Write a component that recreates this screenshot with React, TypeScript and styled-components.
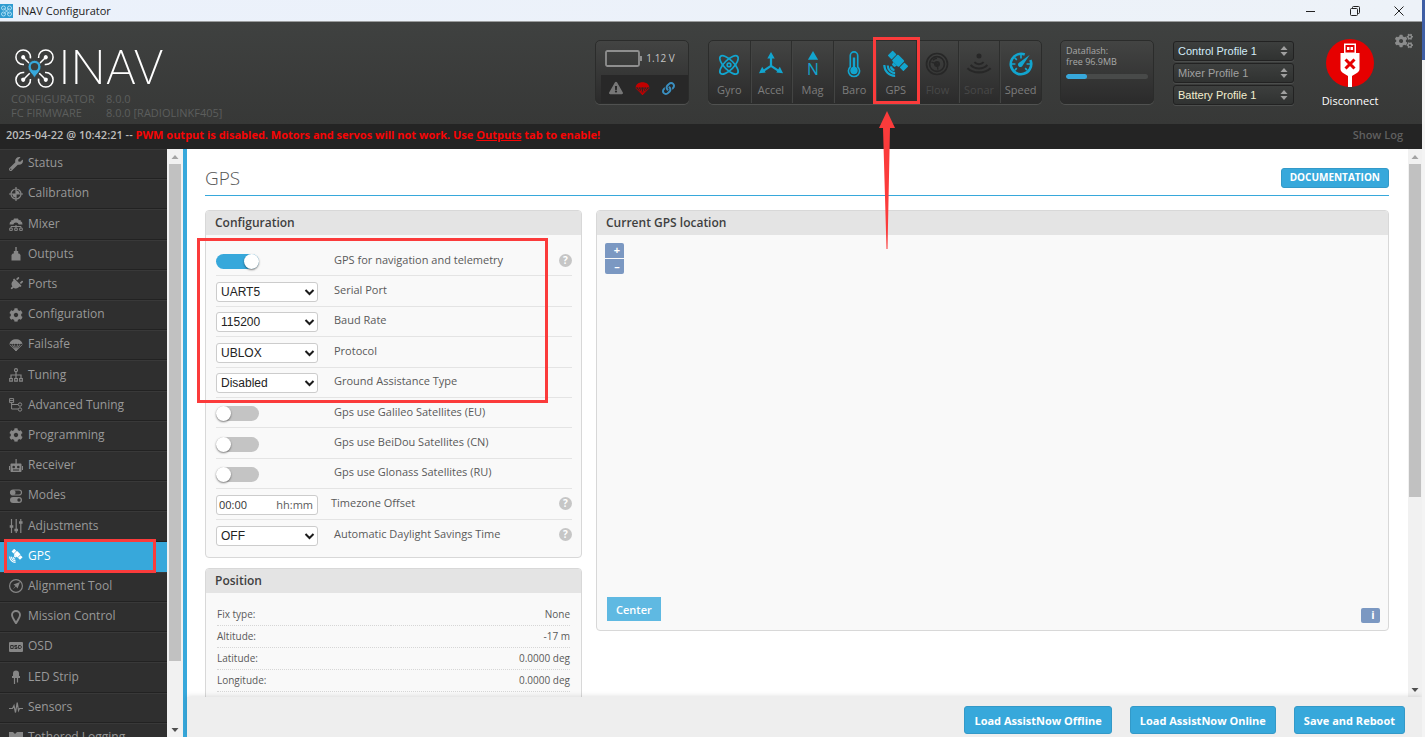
import React, { useId } from "react";
import styled, { createGlobalStyle, css } from "styled-components";
import { FaWrench, FaPlug, FaCog, FaCogs, FaLink, FaExclamationTriangle } from "react-icons/fa";

const GlobalStyle = createGlobalStyle`
  *, *::before, *::after { box-sizing: border-box; }
  html, body, #root { height: 100%; }
  body {
    margin: 0;
    overflow: hidden;
    font-family: "Open Sans", "Noto Sans", sans-serif;
    font-size: 11px;
    color: #5a5a5a;
    background: linear-gradient(#3f5fa5 60px, #f4f4f4 60px);
  }
  button, select, input { font-family: inherit; }
`;

const accent = "#37a8db";
const sensorBlue = "#12a5cf";
const markRed = "#fb3b3b";

/* ---------- window frame ---------- */

const Window = styled.div`
  display: flex;
  flex-direction: column;
  height: 100vh;
  margin-right: 3px;
  overflow: hidden;
  background: #fff;
`;

const TitleBar = styled.div`
  display: flex;
  align-items: center;
  flex: none;
  height: 22px;
  padding-right: 16px;
  gap: 5px;
  background: linear-gradient(90deg, #ebf1fb, #edf2f8);
  border-bottom: 1px solid #9a9c9d;
  color: #1c1c1c;
  font-size: 11px;
`;

const WindowTitle = styled.span`
  flex: 1;
`;

const WindowButton = styled.button`
  display: flex;
  align-items: center;
  justify-content: center;
  width: 14px;
  height: 14px;
  margin-left: 25px;
  padding: 0;
  border: 0;
  background: none;
  color: #222;
`;

/* ---------- header ---------- */

const Header = styled.header`
  display: flex;
  flex: none;
  height: 102px;
  padding: 18px 8px 0 11px;
  background: linear-gradient(#3f4140, #373837);
`;

const Brand = styled.div`
  flex: 1;
  padding-top: 4px;
`;

const LogoRow = styled.div`
  display: flex;
  align-items: center;
  gap: 4px;
  height: 48px;
  padding-left: 4px;
`;

const LogoText = styled.span`
  color: #fff;
  font-family: Roboto, "Open Sans", sans-serif;
  font-size: 49px;
  font-weight: 200;
  line-height: 48px;
`;

const Versions = styled.dl`
  display: grid;
  grid-template-columns: 95px auto;
  margin: 0;
  line-height: 14px;
  color: #5c5e5d;
  dd { margin: 0; }
`;

const panelFace = css`
  border: 1px solid #2b2c2b;
  border-radius: 5px;
  background: linear-gradient(#434443, #2b2b2b);
  box-shadow: 0 1px 0 #505150;
`;

const BatteryBox = styled.div`
  ${panelFace}
  width: 94px;
  height: 64px;
  margin-right: 19px;
  overflow: hidden;
`;

const BatteryTop = styled.div`
  display: flex;
  align-items: center;
  justify-content: center;
  gap: 4px;
  height: 34px;
  padding-right: 4px;
  color: #c4c4c4;
  font-size: 10px;
`;

const BatteryFlags = styled.div`
  display: flex;
  align-items: center;
  justify-content: space-around;
  height: 28px;
  margin-left: 5px;
  padding: 0 7px 2px 2px;
  background: #282828;
`;

const Sensors = styled.ul`
  ${panelFace}
  display: flex;
  width: 334px;
  height: 64px;
  margin: 0 18px 0 0;
  padding: 0;
  list-style: none;
`;

const SensorCell = styled.li<{ $off?: boolean }>`
  position: relative;
  display: flex;
  flex: 1 1 0;
  flex-direction: column;
  align-items: center;
  padding-top: 10px;
  gap: 3px;
  line-height: 20px;
  color: ${(p) => (p.$off ? "#484848" : "#7d7d7d")};
  svg { color: ${(p) => (p.$off ? "#272727" : sensorBlue)}; overflow: visible; }
  & + & { border-left: 1px solid #2d2e2d; box-shadow: inset 1px 0 0 #434443; }
`;

const Dataflash = styled.div`
  ${panelFace}
  width: 94px;
  height: 64px;
  margin-right: 19px;
  padding: 4px 5px;
  color: #a8a8a8;
  font-size: 9px;
  line-height: 11px;
`;

const Meter = styled.div`
  height: 5px;
  margin-top: 7px;
  overflow: hidden;
  border-radius: 3px;
  background: #484a49;
`;

const MeterFill = styled.div`
  height: 100%;
  border-radius: 3px;
  background: ${accent};
`;

const Profiles = styled.div`
  display: flex;
  flex-direction: column;
  gap: 2px;
  width: 121px;
  margin-right: 26px;
  padding-top: 1px;
`;

const SelectShell = styled.div`
  display: grid;
  align-items: center;
  > * { grid-area: 1 / 1; }
  > svg { justify-self: end; pointer-events: none; }
`;

const ProfileSelect = styled.select<{ $tone: string }>`
  width: 100%;
  height: 20px;
  padding: 0 4px;
  appearance: none;
  border: 1px solid #222;
  border-radius: 3px;
  background: linear-gradient(#3d3f3e, #303231);
  box-shadow: 0 1px 0 #4c4e4d;
  color: ${(p) => p.$tone};
  font-family: "Liberation Sans", Arial, sans-serif;
  font-size: 11px;
`;

const ConnectButton = styled.button`
  display: flex;
  flex-direction: column;
  align-items: center;
  width: 60px;
  height: 72px;
  margin-top: -1px;
  padding: 0;
  gap: 5px;
  border: 0;
  background: none;
  color: #fff;
  font-size: 11px;
  line-height: 17px;
  svg { flex: none; }
`;

const SettingsButton = styled.button`
  width: 20px;
  height: 20px;
  margin: -8px 0 0 14px;
  padding: 0;
  border: 0;
  background: none;
  color: #8b8c8c;
`;

/* ---------- log bar ---------- */

const LogBar = styled.div`
  display: flex;
  align-items: center;
  flex: none;
  height: 25px;
  padding: 0 19px 5px 6px;
  background: #242424;
  color: #bdbdbd;
  font-weight: 600;
  white-space: pre;
`;

const LogText = styled.p`
  flex: 1;
  margin: 0;
`;

const LogWarning = styled.strong`
  color: #f60505;
  font-weight: 700;
  a { color: inherit; }
`;

const ShowLog = styled.button`
  padding: 0;
  border: 0;
  background: none;
  color: #606060;
  font-size: 11px;
  font-weight: 600;
`;

/* ---------- body ---------- */

const Body = styled.div`
  display: flex;
  flex: 1;
  min-height: 0;
`;

const Sidebar = styled.div`
  display: flex;
  flex: none;
  border-right: 4px solid ${accent};
  background: #2f2f2f;
`;

const Nav = styled.nav`
  width: 167px;
  overflow: hidden;
`;

const NavList = styled.ul`
  display: flex;
  flex-direction: column;
  height: calc(100% + 16px);
  margin: 0;
  padding: 0;
  list-style: none;
`;

const NavItem = styled.li`
  position: relative;
  flex: 1 0 30px;
`;

const NavLink = styled.a<{ $active?: boolean }>`
  display: flex;
  align-items: center;
  height: 100%;
  padding: 0 0 3px 9px;
  gap: 5px;
  border-top: 1px solid ${(p) => (p.$active ? accent : "#393939")};
  border-bottom: 1px solid ${(p) => (p.$active ? accent : "#222")};
  background: ${(p) => (p.$active ? accent : "transparent")};
  color: ${(p) => (p.$active ? "#fff" : "#999")};
  font-size: 12px;
  text-decoration: none;
  white-space: nowrap;
  svg { flex: none; color: ${(p) => (p.$active ? "#fff" : "#868686")}; margin-top: 2px; }
`;

const Track = styled.div<{ $wide?: boolean }>`
  display: flex;
  flex: none;
  flex-direction: column;
  align-items: center;
  width: ${(p) => (p.$wide ? 16 : 14)}px;
  background: #f1f1f1;
  svg { flex: none; }
`;

const Thumb = styled.div<{ $share: number }>`
  flex: ${(p) => p.$share} 0 0;
  width: 12px;
  background: #c1c1c1;
`;

const TrackRest = styled.div<{ $share: number }>`
  flex: ${(p) => p.$share} 0 0;
`;

const Main = styled.main`
  display: flex;
  flex: 1;
  flex-direction: column;
  min-width: 0;
`;

const ScrollArea = styled.div`
  display: flex;
  flex: 1;
  min-height: 0;
`;

const Content = styled.div`
  flex: 1;
  min-width: 0;
  padding: 14px 19px 0 18px;
  overflow: hidden;
`;

const PageHead = styled.div`
  display: flex;
  align-items: center;
  justify-content: space-between;
  height: 33px;
  margin-bottom: 14px;
  padding-bottom: 3px;
  border-bottom: 1px solid ${accent};
`;

const PageTitle = styled.h1`
  margin: 0;
  color: #555;
  font-size: 19px;
  font-weight: 300;
`;

const DocLink = styled.a`
  padding: 0 8px 1px;
  border: 1px solid #3399c8;
  border-radius: 3px;
  background: ${accent};
  color: #fff;
  font-size: 10px;
  font-weight: 700;
  line-height: 17px;
  text-decoration: none;
`;

const Columns = styled.div`
  display: grid;
  grid-template-columns: 377fr 793fr;
  align-items: start;
  gap: 14px;
`;

const LeftColumn = styled.div`
  display: grid;
  gap: 10px;
`;

const Panel = styled.section`
  position: relative;
  border: 1px solid #d8d8d8;
  border-radius: 4px;
  background: #f9f9f9;
`;

const PanelTitle = styled.h2`
  margin: 0;
  padding: 0 9px;
  border-radius: 3px 3px 0 0;
  background: #e4e4e4;
  color: #3f3f3f;
  font-size: 12px;
  font-weight: 600;
  line-height: 24px;
`;

const Settings = styled.div`
  display: grid;
  grid-auto-rows: 1fr;
  min-height: 304px;
  margin: 11px 9px 7px 10px;
`;

const SettingRow = styled.div`
  display: flex;
  align-items: center;
  border-bottom: 1px solid #e4e4e4;
  &:last-child { border-bottom: 0; }
`;

const ControlCell = styled.div<{ $tight?: boolean }>`
  width: ${(p) => (p.$tight ? 115 : 118)}px;
  padding-top: 2px;
`;

const SettingLabel = styled.label`
  flex: 1;
  padding-bottom: 3px;
`;

const SettingSelect = styled.select`
  width: 102px;
  height: 20px;
  padding: 0 4px;
  appearance: none;
  border: 1px solid #ccc;
  border-radius: 3px;
  background: #fff;
  color: #222;
  font-family: "Liberation Sans", Arial, sans-serif;
  font-size: 12px;
`;

const SettingShell = styled(SelectShell)`
  width: 102px;
`;

const TimeBox = styled.div`
  display: flex;
  align-items: center;
  width: 102px;
  height: 20px;
  padding: 0 4px 0 2px;
  border: 1px solid #ccc;
  border-radius: 3px;
  background: #fff;
`;

const TimeInput = styled.input`
  flex: 1;
  min-width: 0;
  padding: 0;
  border: 0;
  background: none;
  color: #333;
  font-size: 11px;
`;

const Switch = styled.input`
  display: block;
  width: 43px;
  height: 15px;
  margin: 0;
  appearance: none;
  border-radius: 8px;
  background: #c4c4c4;
  &::before {
    content: "";
    display: block;
    width: 15px;
    height: 15px;
    border-radius: 50%;
    background: #fff;
    box-shadow: 0 1px 2px rgba(0, 0, 0, 0.5);
  }
  &:checked { background: ${accent}; }
  &:checked::before { margin-left: auto; }
`;

const Help = styled.button`
  width: 13px;
  height: 13px;
  padding: 0;
  border: 0;
  border-radius: 50%;
  background: #c6c6c6;
  color: #fff;
  font-size: 10px;
  font-weight: 700;
  line-height: 13px;
`;

const Readings = styled.table`
  width: calc(100% - 22px);
  margin: 10px 11px 20px;
  border-collapse: collapse;
  th, td {
    height: 22px;
    padding: 0;
    border-bottom: 1px dotted #d6d6d6;
    font-size: 10px;
    font-weight: 400;
    text-align: left;
  }
  td { text-align: right; }
`;

const MapArea = styled.div`
  display: flex;
  flex-direction: column;
  justify-content: space-between;
  min-height: 395px;
  padding: 8px 8px 7px;
`;

const ZoomGroup = styled.div`
  display: grid;
  gap: 1px;
  width: 19px;
`;

const MapButton = styled.button<{ $edge?: "top" | "bottom" }>`
  width: 19px;
  height: 15px;
  padding: 0 3px 2px 8px;
  border: 0;
  border-radius: ${(p) =>
    p.$edge === "top" ? "2px 2px 0 0" : p.$edge === "bottom" ? "0 0 2px 2px" : "2px"};
  background: #7b98c2;
  color: #fff;
  font-size: 11px;
  font-weight: 700;
  line-height: 13px;
`;

const MapFoot = styled.div`
  display: flex;
  align-items: end;
  justify-content: space-between;
  padding-left: 2px;
`;

const CenterButton = styled.button`
  height: 24px;
  margin-bottom: 2px;
  padding: 0 9px;
  border: 0;
  background: #5fb9e2;
  color: #fff;
  font-size: 11px;
  font-weight: 600;
`;

const Footer = styled.footer`
  position: relative;
  display: flex;
  flex: none;
  justify-content: flex-end;
  gap: 18px;
  height: 40px;
  padding: 9px 17px 0;
  background: #eee;
  box-shadow: 0 -1px 5px rgba(0, 0, 0, 0.12);
`;

const ActionButton = styled.button`
  height: 28px;
  padding: 0 9px;
  border: 1px solid #3399c8;
  border-radius: 3px;
  background: ${accent};
  color: #fff;
  font-size: 11px;
  font-weight: 700;
`;

/* ---------- highlight marks laid over the window ---------- */

const mark = css`
  position: absolute;
  border: 3px solid ${markRed};
  pointer-events: none;
  z-index: 2;
`;

const SensorMark = styled.div`
  ${mark}
  inset: -4px -4px -1px -3px;
`;

const MarkArrow = styled.svg`
  position: absolute;
  top: 70px;
  left: 1px;
  z-index: 3;
  && { color: ${markRed}; }
`;

const NavMark = styled.div`
  ${mark}
  inset: -3px 11px -1px 4px;
`;

const SettingsMark = styled.div`
  ${mark}
  top: 27px;
  left: -9px;
  right: 33px;
  height: 165px;
`;

/* ---------- drawings ---------- */

const Satellite = ({ size }: { size: number }) => (
  <svg width={size} height={size} viewBox="0 0 24 24" fill="currentColor" aria-hidden="true">
    <g transform="rotate(45 14 9)">
      <rect x="9.6" y="5" width="8.8" height="8" rx="1" />
      <rect x="3.8" y="6" width="5" height="6.4" rx=".6" />
      <rect x="19.2" y="6" width="5" height="6.4" rx=".6" />
      <path d="M11.5 13h5l-1 2.6h-3z" />
    </g>
    <g fill="none" stroke="currentColor" strokeWidth="2">
      <path d="M7.4 14.2a3.6 3.6 0 0 0 3.2 3.4" />
      <path d="M4.4 13.4a7 7 0 0 0 6.8 7" />
      <path d="M1.2 13a10 10 0 0 0 10 10" />
    </g>
  </svg>
);

const Parachute = ({ size }: { size: number }) => (
  <svg width={size} height={size} viewBox="0 0 24 24" aria-hidden="true">
    <path d="M1 11C1 5.500 6 2 12 2s11 3.500 11 9c-1-1.300-3.500-1.300-4.600 0-1.200-1.300-3-1.300-3.900 0-1-1.300-4-1.300-5 0-.9-1.300-2.700-1.300-3.900 0C4.500 9.700 2 9.700 1 11z" fill="currentColor" />
    <path d="M1.500 11.500 12 22 22.500 11.500M5.600 11.500 12 22l6.400-10.500M9.500 11.500 12 22l2.500-10.500" fill="none" stroke="currentColor" strokeWidth="1.500" />
  </svg>
);

const sensorArt: Record<string, React.ReactNode> = {
  Gyro: (
    <g fill="none" stroke="currentColor" strokeWidth="1.800">
      <ellipse cx="14" cy="15" rx="13" ry="5.200" transform="rotate(45 14 15)" />
      <ellipse cx="14" cy="15" rx="13" ry="5.200" transform="rotate(-45 14 15)" />
      <circle cx="14" cy="15" r="2" />
    </g>
  ),
  Accel: (
    <g fill="currentColor">
      <path d="M14 5v11M14 16 5 22M14 16l9 6" stroke="currentColor" strokeWidth="2.400" />
      <path d="m14 1 4 7h-8zM1 24l3.500-7 3.800 6.200zM27 24l-3.500-7-3.800 6.200z" />
    </g>
  ),
  Mag: (
    <g fill="currentColor">
      <path d="m14 0 5.500 9.500h-11z" />
      <text x="14" y="26" textAnchor="middle" fontSize="17" fontFamily="Open Sans">N</text>
    </g>
  ),
  Baro: (
    <g>
      <path d="M10 17V5a4 4 0 0 1 8 0v12a6 6 0 1 1-8 0z" fill="none" stroke="currentColor" strokeWidth="1.800" />
      <circle cx="14" cy="21" r="4" fill="currentColor" />
      <path d="M14 7v12" stroke="currentColor" strokeWidth="2.600" />
    </g>
  ),
  Flow: (
    <g fill="none" stroke="currentColor">
      <circle cx="14" cy="14" r="11.300" strokeWidth="1.800" />
      <circle cx="14" cy="14" r="8" strokeWidth="1.800" />
      <circle cx="14" cy="14" r="2" strokeWidth="2.500" />
      <path d="m14 14-6-2M14 14l1 6M9.500 10a6 6 0 0 1 4.500-2" strokeWidth="1.500" />
    </g>
  ),
  Sonar: (
    <g fill="none" stroke="currentColor" strokeWidth="2.200">
      <circle cx="14" cy="5.500" r="2.700" fill="currentColor" stroke="none" />
      <path d="M9 12c3 3 7 3 10 0M5 15c5 5 13 5 18 0M1.500 18.500c7 6 18 6 25 0" />
    </g>
  ),
  Speed: (
    <g fill="none" stroke="currentColor">
      <circle cx="14" cy="14" r="11" strokeWidth="2.800" strokeDasharray="60 9.115" strokeDashoffset="-7" transform="rotate(-60 14 14)" />
      <path d="M4 14h4M7 7l2.500 2.500M14 4v4M20 14h4M7.500 20.500l2-2M20.500 20.500l-2-2" strokeWidth="1.800" />
      <path d="M23.500 4 15.800 15.600a2.600 2.600 0 1 1-3.600-3.200z" fill="currentColor" stroke="none" />
    </g>
  ),
};

const SensorIcon = ({ name }: { name: string }) =>
  name === "GPS" ? (
    <Satellite size={26} />
  ) : (
    <svg width="26" height="26" viewBox="0 0 28 28" aria-hidden="true">{sensorArt[name]}</svg>
  );

const line = { fill: "none", stroke: "currentColor", strokeWidth: 1.2 };

const navArt: Record<string, React.ReactNode> = {
  Calibration: (
    <g>
      <circle cx="7" cy="7" r="5" {...line} />
      <path d="M7 0v14M0 7h14" {...line} />
      <path d="M7 7V3.500A3.500 3.500 0 0 1 10.500 7zM7 7v3.500A3.500 3.500 0 0 1 3.500 7z" fill="currentColor" />
    </g>
  ),
  Mixer: (
    <g fill="currentColor">
      <path d="M.5 7.500 1 5l1.200-.4L2.500 3l1.700.3L5 1.500h4l.8 1.800 1.700-.3.3 1.600 1.200.4.500 2.500H9.700a2.800 2.800 0 0 0-5.400 0z" />
      <path d="M7 8v3M2 11V9.500h10V11" {...line} strokeWidth={1} />
      <path d="M.7 11.200h2.600v2.200H.7zM5.700 11.200h2.600v2.200H5.700zM10.700 11.200h2.600v2.200h-2.600z" {...line} strokeWidth={1} />
    </g>
  ),
  Outputs: <path d="M6.300 0h1.400v4h1.500v2.500h1L11.500 8v5.500h-9V8l1.300-1.500h1V4h1.500z" fill="currentColor" />,
  Tuning: (
    <g {...line}>
      <circle cx="7" cy="2.200" r="1.500" />
      <path d="M7 4v6M2 10V7h10v3" />
      <path d="M.7 10.500h2.600v2.600H.7zM5.700 10.500h2.600v2.600H5.700zM10.700 10.500h2.600v2.600h-2.600z" />
    </g>
  ),
  "Advanced Tuning": (
    <g {...line} strokeWidth={1}>
      <path d="M.6.600h4v4h-4zM.6 2.600h4M2.600 4.600V11H9M2.600 6.500H9" />
      <circle cx="11" cy="6.500" r="1.700" />
      <circle cx="11" cy="11.500" r="1.700" />
    </g>
  ),
  Receiver: (
    <g fill="currentColor">
      <path d="M6.500 0h1.200v4.500h3.800c.6 0 1 .4 1 1V12c0 .6-.4 1-1 1h-9c-.6 0-1-.4-1-1V5.500c0-.6.4-1 1-1h4zM0 7h1v4H0zM13 7h1v4h-1z" />
      <circle cx="4.700" cy="8" r="1.300" fill="#2f2f2f" />
      <circle cx="9.300" cy="8" r="1.300" fill="#2f2f2f" />
      <path d="M4 11h6" stroke="#2f2f2f" />
    </g>
  ),
  Modes: (
    <g>
      <rect x="1.500" y="1" width="11" height="5" rx="2.500" {...line} />
      <circle cx="4" cy="3.500" r="2.500" fill="currentColor" />
      <rect x="1" y="8" width="12" height="6" rx="3" fill="currentColor" />
      <circle cx="10" cy="11" r="1.700" fill="#2f2f2f" />
    </g>
  ),
  Adjustments: (
    <g {...line}>
      <path d="M2.500 0v14M7.200 0v14M11.800 0v14" />
      <path d="M.7 7.500h3.600M5.400 11h3.600M10 3.500h3.600" strokeWidth={2.600} />
    </g>
  ),
  "Alignment Tool": (
    <g>
      <circle cx="7" cy="7" r="6.400" {...line} />
      <path d="m11 3-2.500 6.500L7 7.500 3.300 10.700 6.500 7 4.500 5.500z" fill="currentColor" />
    </g>
  ),
  "Mission Control": <path d="M7 13.200C5 9.500 3 7.800 3 5a4 4 0 0 1 8 0c0 2.800-2 4.500-4 8.200z" {...line} strokeWidth={1.900} />,
  OSD: (
    <g>
      <rect y="2" width="14" height="10" rx="1" fill="currentColor" />
      <path d="M1.700 5.500h2.500v3H1.700zM8 5.500H5.800V7H8v1.500H5.600M9.600 5.500h1.800l.8.700v1.600l-.8.700H9.600z" fill="none" stroke="#2f2f2f" />
    </g>
  ),
  "LED Strip": (
    <g fill="currentColor">
      <path d="M4 6V3.500a3 3 0 0 1 6 0V6h1v2H3V6z" />
      <path d="M5.500 8v6M8.500 8v4.500" {...line} />
    </g>
  ),
  Sensors: <path d="M0 8.500h3.500L5 5.500l1.500 7 1.700-10 1.300 8 1-2H14" {...line} />,
  "Tethered Logging": <path d="M0 2h4l2 2 2-2h6v10H0z" fill="currentColor" />,
};

const PortsIcon = styled(FaPlug)`
  transform: rotate(45deg);
`;

const NavIcon = ({ name }: { name: string }) => {
  if (name === "Status") return <FaWrench size={14} />;
  if (name === "Ports") return <PortsIcon size={14} />;
  if (name === "Configuration" || name === "Programming") return <FaCog size={14} />;
  if (name === "Failsafe") return <Parachute size={14} />;
  if (name === "GPS") return <Satellite size={14} />;
  return <svg width="14" height="14" viewBox="0 0 14 14" aria-hidden="true">{navArt[name]}</svg>;
};

const rotors = [[8, 8], [30, 8], [8, 30], [30, 30]];

const DroneLogo = () => (
  <svg width="39" height="39" viewBox="0 0 38 38" aria-hidden="true">
    {rotors.map(([x, y]) => {
      const angle = Math.atan2(19 - y, 19 - x) * (180 / Math.PI);
      return (
        <g key={`${x}-${y}`} transform={`translate(${x} ${y}) rotate(${angle})`}>
          <circle r="7.100" fill="none" stroke="#fff" strokeWidth="1.500" strokeDasharray="35 9.600" strokeDashoffset="-4.800" />
          <circle r="2" fill="#fff" />
          <path d="M0 0h9" stroke="#fff" strokeWidth="1.500" />
        </g>
      );
    })}
    <path d="M19 28c-2-3.500-6.300-6.500-6.300-10.700a6.300 6.300 0 0 1 12.600 0c0 4.200-4.300 7.200-6.300 10.700z" fill={accent} stroke="#3b3d3c" strokeWidth=".8" />
    <circle cx="19" cy="17.200" r="3.600" fill="#3b3d3c" />
  </svg>
);

const AppIcon = () => (
  <svg width="13" height="14" viewBox="0 0 13 14" aria-hidden="true">
    <rect width="13" height="14" fill="#2f9bd0" />
    <g fill="none" stroke="#a9dcf3">
      <circle cx="3.500" cy="4" r="2" />
      <circle cx="9.500" cy="4" r="2" />
      <circle cx="3.500" cy="10" r="2" />
      <circle cx="9.500" cy="10" r="2" />
      <path d="m3.500 4 6 6M9.500 4l-6 6" />
    </g>
  </svg>
);

const UsbPlug = () => (
  <svg width="48" height="48" viewBox="0 0 48 48" aria-hidden="true">
    <circle cx="24" cy="24" r="24" fill="#e60000" />
    <path d="M18 4.500h12V14H18z" fill="#fff" />
    <path d="M19.500 6h9v7.500h-9z" fill="#e60000" />
    <path d="M21 8h2.500v3H21zM24.500 8H27v3h-2.500z" fill="#fff" />
    <path d="M14.500 14h19v16c0 3.500-4.500 5-7.500 7v11h-4V37c-3-2-7.500-3.500-7.500-7z" fill="#fff" />
    <path d="m19.500 20.500 9 9M28.500 20.500l-9 9" stroke="#e60000" strokeWidth="3" />
  </svg>
);

const Battery = () => (
  <svg width="37" height="17" viewBox="0 0 37 17" aria-hidden="true">
    <rect x="1" y="1" width="33" height="15" rx="1.500" fill="none" stroke="#8f8f8f" strokeWidth="1.800" />
    <rect x="35" y="6" width="2" height="5" fill="#8f8f8f" />
  </svg>
);

const Chevron = () => (
  <svg width="17" height="8" viewBox="0 0 17 8" aria-hidden="true">
    <path d="m4.500 2 4 4 4-4" fill="none" stroke="#1b1b1b" strokeWidth="2" />
  </svg>
);

const Spinner = () => (
  <svg width="16" height="12" viewBox="0 0 16 12" aria-hidden="true">
    <path d="M2.500 5 6 1l3.500 4zM2.500 7h7L6 11z" fill="#a0a0a0" />
  </svg>
);

const ScrollArrow = ({ down }: { down?: boolean }) => (
  <svg width="14" height="15" viewBox="0 0 14 15" aria-hidden="true">
    <path d={down ? "M3.500 6h7L7 10z" : "M3.500 10h7L7 6z"} fill={down ? "#505050" : "#a3a3a3"} />
  </svg>
);

/* ---------- data ---------- */

const navNames = [
  "Status", "Calibration", "Mixer", "Outputs", "Ports", "Configuration", "Failsafe",
  "Tuning", "Advanced Tuning", "Programming", "Receiver", "Modes", "Adjustments", "GPS",
  "Alignment Tool", "Mission Control", "OSD", "LED Strip", "Sensors", "Tethered Logging",
];

const sensorNames = ["Gyro", "Accel", "Mag", "Baro", "GPS", "Flow", "Sonar", "Speed"];

const profiles = [
  { name: "Control Profile 1", tone: "#d3ecf8" },
  { name: "Mixer Profile 1", tone: "#a0a0a0" },
  { name: "Battery Profile 1", tone: "#f3eed0" },
];

type Setting = {
  label: string;
  kind: "switch" | "select" | "time";
  value?: string;
  on?: boolean;
  help?: boolean;
};

const settings: Setting[] = [
  { label: "GPS for navigation and telemetry", kind: "switch", on: true, help: true },
  { label: "Serial Port", kind: "select", value: "UART5" },
  { label: "Baud Rate", kind: "select", value: "115200" },
  { label: "Protocol", kind: "select", value: "UBLOX" },
  { label: "Ground Assistance Type", kind: "select", value: "Disabled" },
  { label: "Gps use Galileo Satellites (EU)", kind: "switch" },
  { label: "Gps use BeiDou Satellites (CN)", kind: "switch" },
  { label: "Gps use Glonass Satellites (RU)", kind: "switch" },
  { label: "Timezone Offset", kind: "time", value: "00:00", help: true },
  { label: "Automatic Daylight Savings Time", kind: "select", value: "OFF", help: true },
];

const readings = [
  ["Fix type:", "None"],
  ["Altitude:", "-17 m"],
  ["Latitude:", "0.0000 deg"],
  ["Longitude:", "0.0000 deg"],
];

/* ---------- composed parts ---------- */

const SettingLine = ({ label, kind, value, on, help }: Setting) => {
  const id = useId();
  return (
    <SettingRow>
      <ControlCell $tight={kind === "time"}>
        {kind === "switch" && <Switch id={id} type="checkbox" defaultChecked={on} />}
        {kind === "select" && (
          <SettingShell>
            <SettingSelect id={id}><option>{value}</option></SettingSelect>
            <Chevron />
          </SettingShell>
        )}
        {kind === "time" && (
          <TimeBox>
            <TimeInput id={id} defaultValue={value} />
            <span>hh:mm</span>
          </TimeBox>
        )}
      </ControlCell>
      <SettingLabel htmlFor={id}>{label}</SettingLabel>
      {help && <Help type="button" aria-label={`Help: ${label}`}>?</Help>}
    </SettingRow>
  );
};

const Scrollbar = ({ wide, thumb, rest }: { wide?: boolean; thumb: number; rest: number }) => (
  <Track $wide={wide}>
    <ScrollArrow />
    <Thumb $share={thumb} />
    <TrackRest $share={rest} />
    <ScrollArrow down />
  </Track>
);

const FailsafeFlag = styled.span`
  display: flex;
  color: #c40000;
`;

export default function App() {
  return (
    <>
      <GlobalStyle />
      <Window>
        <TitleBar>
          <AppIcon />
          <WindowTitle>INAV Configurator</WindowTitle>
          <WindowButton aria-label="Minimize">
            <svg width="10" height="10" viewBox="0 0 10 10"><path d="M0 5.500h9" stroke="currentColor" /></svg>
          </WindowButton>
          <WindowButton aria-label="Restore">
            <svg width="10" height="10" viewBox="0 0 10 10" fill="none" stroke="currentColor">
              <rect x=".5" y="2.500" width="7" height="7" rx="1" />
              <path d="M2.500 2.500V1.500q0-1 1-1H8.500q1 0 1 1V6.500q0 1-1 1h-1" />
            </svg>
          </WindowButton>
          <WindowButton aria-label="Close">
            <svg width="10" height="10" viewBox="0 0 10 10"><path d="m.5.500 9 9M9.500.500l-9 9" stroke="currentColor" /></svg>
          </WindowButton>
        </TitleBar>

        <Header>
          <Brand>
            <LogoRow>
              <DroneLogo />
              <LogoText>INAV</LogoText>
            </LogoRow>
            <Versions>
              <dt>CONFIGURATOR</dt>
              <dd>8.0.0</dd>
              <dt>FC FIRMWARE</dt>
              <dd>8.0.0 [RADIOLINKF405]</dd>
            </Versions>
          </Brand>
          <BatteryBox>
            <BatteryTop>
              <Battery />
              <span>1.12 V</span>
            </BatteryTop>
            <BatteryFlags>
              <FaExclamationTriangle size={14} color="#777" />
              <FailsafeFlag><Parachute size={15} /></FailsafeFlag>
              <FaLink size={13} color="#3a8fc0" />
            </BatteryFlags>
          </BatteryBox>
          <Sensors>
            {sensorNames.map((name) => (
              <SensorCell key={name} $off={name === "Flow" || name === "Sonar"}>
                <SensorIcon name={name} />
                <span>{name}</span>
                {name === "GPS" && (
                  <>
                    <SensorMark />
                    <MarkArrow width="20" height="138" viewBox="0 0 20 138" aria-hidden="true">
                      <path d="M10 0 18 17h-5L10.500 138h-1L6 17H2z" fill="currentColor" />
                    </MarkArrow>
                  </>
                )}
              </SensorCell>
            ))}
          </Sensors>
          <Dataflash>
            <div>Dataflash:</div>
            <div>free 96.9MB</div>
            <Meter><MeterFill style={{ width: "25%" }} /></Meter>
          </Dataflash>
          <Profiles>
            {profiles.map(({ name, tone }) => (
              <SelectShell key={name}>
                <ProfileSelect $tone={tone} aria-label={name}><option>{name}</option></ProfileSelect>
                <Spinner />
              </SelectShell>
            ))}
          </Profiles>
          <ConnectButton>
            <UsbPlug />
            <span>Disconnect</span>
          </ConnectButton>
          <SettingsButton aria-label="Options"><FaCogs size={18} /></SettingsButton>
        </Header>

        <LogBar>
          <LogText>
            2025-04-22 @ 10:42:21 -- <LogWarning>PWM output is disabled. Motors and servos will not work. Use <a href="#outputs">Outputs</a> tab to enable!</LogWarning>
          </LogText>
          <ShowLog>Show Log</ShowLog>
        </LogBar>

        <Body>
          <Sidebar>
            <Nav>
              <NavList>
                {navNames.map((name) => (
                  <NavItem key={name}>
                    <NavLink href={`#${name}`} $active={name === "GPS"}>
                      <NavIcon name={name} />
                      <span>{name}</span>
                    </NavLink>
                    {name === "GPS" && <NavMark />}
                  </NavItem>
                ))}
              </NavList>
            </Nav>
            <Scrollbar wide thumb={497} rest={61} />
          </Sidebar>

          <Main>
            <ScrollArea>
              <Content>
                <PageHead>
                  <PageTitle>GPS</PageTitle>
                  <DocLink href="#documentation">DOCUMENTATION</DocLink>
                </PageHead>
                <Columns>
                  <LeftColumn>
                    <Panel>
                      <PanelTitle>Configuration</PanelTitle>
                      <Settings>
                        {settings.map((s) => <SettingLine key={s.label} {...s} />)}
                      </Settings>
                      <SettingsMark />
                    </Panel>
                    <Panel>
                      <PanelTitle>Position</PanelTitle>
                      <Readings>
                        <tbody>
                          {readings.map(([k, v]) => (
                            <tr key={k}><th scope="row">{k}</th><td>{v}</td></tr>
                          ))}
                        </tbody>
                      </Readings>
                    </Panel>
                  </LeftColumn>
                  <Panel>
                    <PanelTitle>Current GPS location</PanelTitle>
                    <MapArea>
                      <ZoomGroup>
                        <MapButton $edge="top" aria-label="Zoom in">+</MapButton>
                        <MapButton $edge="bottom" aria-label="Zoom out">–</MapButton>
                      </ZoomGroup>
                      <MapFoot>
                        <CenterButton>Center</CenterButton>
                        <MapButton aria-label="Attributions">i</MapButton>
                      </MapFoot>
                    </MapArea>
                  </Panel>
                </Columns>
              </Content>
              <Scrollbar thumb={333} rest={185} />
            </ScrollArea>
            <Footer>
              <ActionButton>Load AssistNow Offline</ActionButton>
              <ActionButton>Load AssistNow Online</ActionButton>
              <ActionButton>Save and Reboot</ActionButton>
            </Footer>
          </Main>
        </Body>
      </Window>
    </>
  );
}
